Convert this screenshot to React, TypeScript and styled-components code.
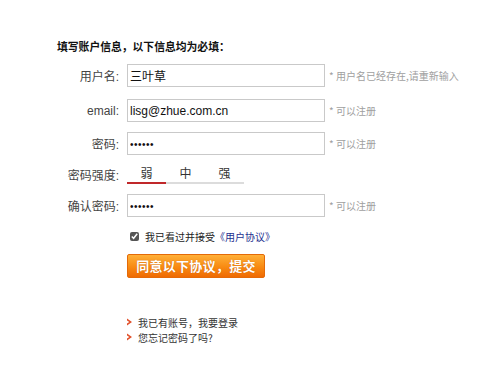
import React from "react";
import styled, { createGlobalStyle } from "styled-components";

const Global = createGlobalStyle`
  html, body { margin: 0; padding: 0; background: #fff; }
  body { font-family: "Liberation Sans", "Noto Sans CJK SC", Arial, sans-serif; color: #333; }
  * { box-sizing: border-box; }
`;

const Page = styled.div`
  width: 499px;
  height: 389px;
  padding-top: 40px;
  overflow: hidden;
`;

const Title = styled.div`
  margin-left: 57px;
  font-size: 10.8px;
  font-weight: bold;
  color: #111;
  line-height: 12px;
  height: 12px;
  font-family: "Noto Sans CJK SC", sans-serif;
`;

const Form = styled.div`
  margin-top: 12px;
  display: flex;
  flex-direction: column;
`;

const Row = styled.div<{ $h: number; $mb: number }>`
  display: flex;
  align-items: center;
  height: ${(p) => p.$h}px;
  margin-bottom: ${(p) => p.$mb}px;
`;

const Label = styled.label`
  width: 120px;
  text-align: right;
  padding-right: 1px;
  font-size: 12px;
  color: #444;
  font-family: "Liberation Sans", "Noto Sans CJK SC", sans-serif;
  flex: none;
`;

const Input = styled.input`
  margin-left: 7px;
  width: 198px;
  height: 23px;
  border: 1px solid #c9c9c9;
  padding: 0 2px;
  font-size: 12px;
  font-family: "Liberation Sans", "Noto Sans CJK SC", sans-serif;
  color: #111;
  outline: none;
  flex: none;
  &[type="password"] { font-size: 10px; letter-spacing: 0.5px; padding-top: 2px; }
`;

const Hint = styled.span`
  margin-left: 4px;
  font-size: 10px;
  color: #a0a0a0;
  font-family: "Noto Sans CJK SC", sans-serif;
`;

const Strength = styled.div`
  margin-left: 7px;
  display: flex;
  align-self: stretch;
  padding-top: 10px;
`;

const Level = styled.div<{ $on?: boolean }>`
  width: 39px;
  height: 19px;
  text-align: center;
  font-size: 12px;
  line-height: 16px;
  color: #333;
  font-family: "Noto Sans CJK SC", sans-serif;
  border-bottom: 2px solid ${(p) => (p.$on ? "#c0282a" : "#dcdcdc")};
`;

const AgreeRow = styled.div`
  margin-left: 130px;
  margin-top: 12px;
  display: flex;
  align-items: center;
  height: 14px;
  font-size: 10px;
  font-family: "Noto Sans CJK SC", sans-serif;
  color: #222;
`;

const Check = styled.input`
  margin: 0 6px 0 0;
  width: 9px;
  height: 9px;
  accent-color: #555;
`;

const Blue = styled.span`
  color: #1d2f8f;
`;

const Submit = styled.button`
  margin-left: 127px;
  margin-top: 11px;
  width: 138px;
  height: 24px;
  border: 1px solid #e46a08;
  border-radius: 2px;
  background: linear-gradient(#ffb038, #f88a12 55%, #ef6a02);
  color: #fff;
  font-weight: bold;
  font-size: 13px;
  font-family: "Noto Sans CJK SC", sans-serif;
  text-shadow: 0 0 1px rgba(160, 60, 0, 0.6);
  padding: 0;
  line-height: 22px;
  letter-spacing: 0.3px;
`;

const Links = styled.ul`
  list-style: none;
  margin: 38px 0 0 126px;
  padding: 0;
  display: flex;
  flex-direction: column;
  gap: 3px;
`;

const LinkItem = styled.li`
  display: flex;
  align-items: center;
  height: 12px;
  font-size: 10px;
  color: #333;
  font-family: "Noto Sans CJK SC", sans-serif;
  gap: 5px;
`;

const Arrow = () => (
  <svg width="7" height="8" viewBox="0 0 7 8">
    <path d="M1 0.5 L6 4 L1 7.5 L1 5.6 L3.3 4 L1 2.4 Z" fill="#e2502a" />
  </svg>
);

export default function App() {
  return (
    <Page>
      <Global />
      <Title>填写账户信息，以下信息均为必填：</Title>
      <Form>
        <Row $h={23} $mb={12}>
          <Label>用户名:</Label>
          <Input defaultValue="三叶草" />
          <Hint>* 用户名已经存在,请重新输入</Hint>
        </Row>
        <Row $h={23} $mb={10}>
          <Label>email:</Label>
          <Input defaultValue="lisg@zhue.com.cn" />
          <Hint>* 可以注册</Hint>
        </Row>
        <Row $h={23} $mb={0}>
          <Label>密码:</Label>
          <Input type="password" defaultValue="123456" />
          <Hint>* 可以注册</Hint>
        </Row>
        <Row $h={39} $mb={0}>
          <Label>密码强度:</Label>
          <Strength>
            <Level $on>弱</Level>
            <Level>中</Level>
            <Level>强</Level>
          </Strength>
        </Row>
        <Row $h={23} $mb={0}>
          <Label>确认密码:</Label>
          <Input type="password" defaultValue="123456" />
          <Hint>* 可以注册</Hint>
        </Row>
      </Form>
      <AgreeRow>
        <Check type="checkbox" defaultChecked />
        <span>
          我已看过并接受<Blue>《用户协议》</Blue>
        </span>
      </AgreeRow>
      <Submit>同意以下协议，提交</Submit>
      <Links>
        <LinkItem>
          <Arrow />
          我已有账号，我要登录
        </LinkItem>
        <LinkItem>
          <Arrow />
          您忘记密码了吗?
        </LinkItem>
      </Links>
    </Page>
  );
}
